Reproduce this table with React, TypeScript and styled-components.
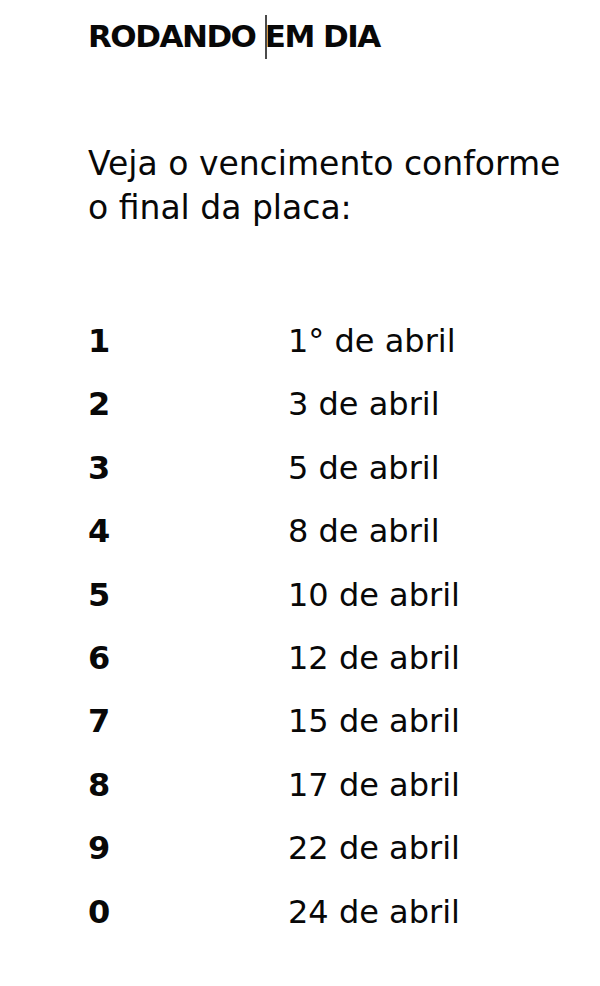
import { createGlobalStyle } from "styled-components";
import styled from "styled-components";

const GlobalStyle = createGlobalStyle`
  html, body {
    margin: 0;
    padding: 0;
    background: #ffffff;
  }
  body {
    font-family: "DejaVu Sans", "Noto Sans", sans-serif;
    color: #080808;
  }
`;

const rows: [string, string][] = [
  ["1", "1° de abril"],
  ["2", "3 de abril"],
  ["3", "5 de abril"],
  ["4", "8 de abril"],
  ["5", "10 de abril"],
  ["6", "12 de abril"],
  ["7", "15 de abril"],
  ["8", "17 de abril"],
  ["9", "22 de abril"],
  ["0", "24 de abril"],
];

export default function App() {
  return (
    <>
      <GlobalStyle />
      <Page>
        <Title>
          RODANDO <Caret />EM DIA
        </Title>
        <Intro>
          Veja o vencimento conforme
          <br />o final da placa:
        </Intro>
        <Table>
          {rows.map(([digit, date]) => (
            <Row key={digit}>
              <Digit>{digit}</Digit>
              <DateText>{date}</DateText>
            </Row>
          ))}
        </Table>
      </Page>
    </>
  );
}

const Page = styled.div`
  width: 600px;
  height: 986px;
  box-sizing: border-box;
  padding: 13px 0 0 88px;
  overflow: hidden;
`;

const Title = styled.h1`
  margin: 0;
  font-size: 31px;
  font-weight: bold;
  line-height: 46px;
  letter-spacing: -1.5px;
`;

const Caret = styled.span`
  display: inline-block;
  width: 2px;
  height: 44px;
  margin-right: -2px;
  vertical-align: -12px;
  background: #4a4a4a;
`;

const Intro = styled.p`
  margin: 83px 0 0 0;
  font-size: 33px;
  line-height: 44px;
`;

const Table = styled.div`
  margin-top: 80px;
  display: flex;
  flex-direction: column;
`;

const Row = styled.div`
  display: grid;
  grid-template-columns: 200px auto;
  font-size: 32px;
  line-height: 63.4px;
`;

const Digit = styled.span`
  font-weight: bold;
`;

const DateText = styled.span``;
